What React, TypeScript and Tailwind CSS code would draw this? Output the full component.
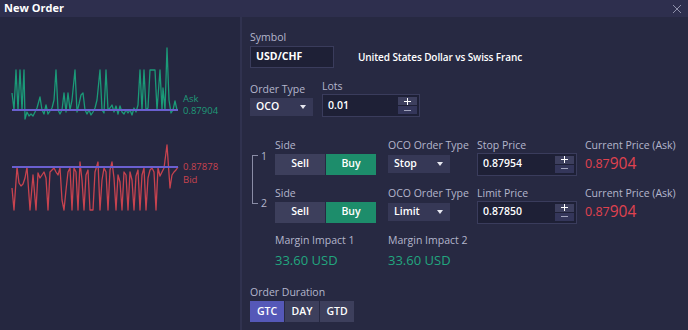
import React from 'react';

const ASK =
  '12,93 14,110 16,70 18,110 20,70 22,110 24,70 25,119 27,112 29,116 31,114 33,116 35,112 37,108 40,97 42,110 44,114 46,105 48,114 50,111 52,108 54,100 56,70 58,110 60,114 62,110 64,93 66,112 68,93 70,110 72,100 75,70 77,112 79,104 81,95 83,93 85,110 87,114 89,110 91,115 93,112 95,108 97,100 100,70 102,110 104,113 106,70 108,110 110,108 112,105 114,112 116,106 118,114 120,106 122,112 124,114 126,110 128,113 130,110 132,115 134,108 136,112 138,105 140,70 142,110 144,70 146,110 148,108 150,70 153,70 155,70 157,110 160,70 162,110 163,88 165,110 167,48 169,100 171,113 173,110 175,101 177,110 178,110';

const BID =
  '12,188 14,210 17,167 19,183 21,186 23,184 25,178 27,167 30,210 33,175 36,210 38,173 40,178 42,175 44,172 46,178 48,210 50,172 52,170 54,168 56,172 58,175 60,168 62,200 64,210 66,190 68,172 70,168 72,210 74,168 76,172 78,210 80,162 82,180 84,210 86,175 88,170 90,210 93,210 95,172 98,162 100,210 102,180 104,168 106,172 108,210 110,170 112,162 114,178 116,210 118,175 120,182 122,210 124,172 126,175 128,210 130,172 132,180 134,210 136,176 138,170 140,210 142,175 144,168 146,210 148,178 150,170 152,168 154,172 156,210 158,168 160,176 162,172 164,168 167,145 170,188 172,175 174,172 176,170 178,167';

function PriceChart() {
  return (
    <svg width="240" height="313" viewBox="0 17 240 313" className="block">
      <polyline points={ASK} fill="none" stroke="#1b9a78" strokeWidth="1.3" strokeLinejoin="round" />
      <line x1="12" y1="110" x2="178" y2="110" stroke="#6a5fd0" strokeWidth="2" />
      <text x="183" y="101.5" fontSize="9.5" fill="#1f9a78" fontFamily="'Open Sans', sans-serif">Ask</text>
      <text x="183" y="113.5" fontSize="9.5" fill="#1f9a78" fontFamily="'Open Sans', sans-serif">0.87904</text>

      <polyline points={BID} fill="none" stroke="#c8434f" strokeWidth="1.3" strokeLinejoin="round" />
      <line x1="12" y1="167" x2="178" y2="167" stroke="#6a5fd0" strokeWidth="2" />
      <text x="183" y="169.5" fontSize="9.5" fill="#c8434f" fontFamily="'Open Sans', sans-serif">0.87878</text>
      <text x="183" y="182.5" fontSize="9.5" fill="#c8434f" fontFamily="'Open Sans', sans-serif">Bid</text>
    </svg>
  );
}

function Label({ children }: { children: React.ReactNode }) {
  return <div className="h-[14px] text-[10.5px] leading-[14px] text-[#b4b6cc]">{children}</div>;
}

function Caret() {
  return (
    <svg width="6" height="4" viewBox="0 0 6 4" className="ml-auto">
      <path d="M0 0h6L3 4z" fill="#e6e7f0" />
    </svg>
  );
}

function Select({ value, width }: { value: string; width: string }) {
  return (
    <div className={`flex h-[18px] ${width} items-center bg-[#363856] pl-[6px] pr-[7px] text-[10.5px] font-semibold text-white`}>
      {value}
      <Caret />
    </div>
  );
}

// tiny +/- spinner drawn with bars
function Stepper() {
  return (
    <div className="flex w-[21px] flex-col gap-[1px] py-[2px] pr-[2px]">
      <div className="relative flex flex-1 items-center justify-center bg-[#3d3f5e]">
        <div className="h-[1px] w-[7px] bg-white" />
        <div className="absolute h-[7px] w-[1px] bg-white" />
      </div>
      <div className="flex flex-1 items-center justify-center bg-[#34365a]">
        <div className="h-[1px] w-[7px] bg-[#a2a4bd]" />
      </div>
    </div>
  );
}

function NumInput({ value, width }: { value: string; width: string }) {
  return (
    <div className={`flex h-[23px] ${width} border border-[#3a3c5c] bg-[#1e2036]`}>
      <div className="flex flex-1 items-center pl-[5px] text-[10.5px] font-semibold text-white">{value}</div>
      <Stepper />
    </div>
  );
}

function SideToggle() {
  return (
    <div className="flex h-[21px] gap-[1px] text-[10.5px] font-semibold text-white">
      <div className="flex w-[50px] items-center justify-center bg-[#3d3f5c]">Sell</div>
      <div className="flex w-[50px] items-center justify-center bg-[#1d8d6b]">Buy</div>
    </div>
  );
}

function OcoRow({ type, priceLabel, price }: { type: string; priceLabel: string; price: string }) {
  return (
    <div className="flex">
      <div className="w-[113px]">
        <Label>Side</Label>
        <div className="mt-[1px] flex h-[22px] items-center">
          <SideToggle />
        </div>
      </div>
      <div className="w-[89px]">
        <Label>OCO Order Type</Label>
        <div className="mt-[1px] flex h-[22px] items-center">
          <Select value={type} width="w-[62px]" />
        </div>
      </div>
      <div className="w-[108px]">
        <Label>{priceLabel}</Label>
        <div className="mt-[1px] flex h-[22px] items-center">
          <NumInput value={price} width="w-[100px]" />
        </div>
      </div>
      <div>
        <Label>Current Price (Ask)</Label>
        <div className="mt-[1px] flex h-[22px] items-center text-[#e0424f]">
          <span className="text-[12.5px]">0.87</span>
          <span className="text-[15.5px] leading-none">904</span>
        </div>
      </div>
    </div>
  );
}

export default function App() {
  return (
    <div className="h-[330px] w-[688px] overflow-hidden bg-[#262840] font-['Open_Sans',sans-serif]">
      <div className="flex h-[17px] items-center bg-[#2e2f4e] pl-[4px] pr-[6px]">
        <div className="text-[11px] font-bold text-white">New Order</div>
        <svg width="10" height="10" viewBox="0 0 10 10" className="ml-auto">
          <path d="M1 1l8 8M9 1l-8 8" stroke="#8e90aa" strokeWidth="1" />
        </svg>
      </div>

      <div className="flex h-[313px]">
        <div className="w-[240px] bg-[#252740]">
          <PriceChart />
        </div>
        <div className="w-[2px] bg-[#30324f]" />

        <div className="flex-1 bg-[#272942] pl-[8px] pt-[13px]">
          <Label>Symbol</Label>
          <div className="mt-[2px] flex items-center">
            <div className="flex h-[22px] w-[84px] items-center border border-[#3a3c5c] bg-[#1e2036] pl-[5px] text-[10.5px] font-bold text-white">
              USD/CHF
            </div>
            <div className="ml-[24px] text-[10px] font-semibold tracking-[-0.1px] text-white">United States Dollar vs Swiss Franc</div>
          </div>

          <div className="mt-[11px] flex items-end">
            <div className="mb-[1px] w-[72px]">
              <div className="mt-[2px]">
                <Label>Order Type</Label>
              </div>
              <div className="mt-[2px]">
                <Select value="OCO" width="w-[63px]" />
              </div>
            </div>
            <div>
              <Label>Lots</Label>
              <div className="mt-[1px]">
                <NumInput value="0.01" width="w-[98px]" />
              </div>
            </div>
          </div>

          <div className="mt-[21px] flex">
            <div className="flex w-[25px] pl-[2px]">
              <div className="mt-[17px] h-[49px] w-[6px] border-y border-l border-[#8a8ca6]" />
              <div className="mt-[12px] flex h-[59px] flex-col justify-between pl-[3px] text-[10.5px] leading-[12px] text-[#b4b6cc]">
                <span>1</span>
                <span>2</span>
              </div>
            </div>
            <div className="flex flex-col gap-[11px]">
              <OcoRow type="Stop" priceLabel="Stop Price" price="0.87954" />
              <OcoRow type="Limit" priceLabel="Limit Price" price="0.87850" />

              <div className="-mt-[1px] flex">
                <div className="w-[113px]">
                  <Label>Margin Impact 1</Label>
                  <div className="mt-[4px] text-[13px] leading-[18px] text-[#22a67f]">33.60 USD</div>
                </div>
                <div>
                  <Label>Margin Impact 2</Label>
                  <div className="mt-[4px] text-[13px] leading-[18px] text-[#22a67f]">33.60 USD</div>
                </div>
              </div>
            </div>
          </div>

          <div className="mt-[16px]">
            <Label>Order Duration</Label>
            <div className="mt-[2px] flex w-fit gap-[1px] text-[10.5px] font-semibold text-white">
              <div className="flex h-[21px] w-[34px] items-center justify-center bg-[#5558b8]">GTC</div>
              <div className="flex h-[21px] w-[34px] items-center justify-center bg-[#3d3f5c]">DAY</div>
              <div className="flex h-[21px] w-[34px] items-center justify-center bg-[#3d3f5c]">GTD</div>
            </div>
          </div>
        </div>
      </div>
    </div>
  );
}
